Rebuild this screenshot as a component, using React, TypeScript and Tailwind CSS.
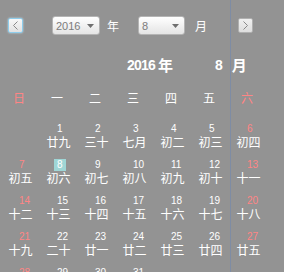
import React from "react";

const lunar = ["廿九","三十","七月","初二","初三","初四","初五","初六","初七","初八","初九","初十","十一","十二","十三","十四","十五","十六","十七","十八","十九","二十","廿一","廿二","廿三","廿四","廿五","廿六","廿七","廿八","廿九"];

const weekdays = ["日","一","二","三","四","五","六"];

function Arrow() {
  return (
    <svg width="7" height="4" viewBox="0 0 7 4" className="block">
      <path d="M0 0 H7 L3.5 4 Z" fill="#6f6f6f" />
    </svg>
  );
}

function Chevron({ dir }: { dir: "l" | "r" }) {
  return (
    <svg width="7" height="9" viewBox="0 0 7 9" className="block">
      <path d={dir === "l" ? "M5.5 0.5 L1.5 4.5 L5.5 8.5" : "M1.5 0.5 L5.5 4.5 L1.5 8.5"} fill="none" stroke="#8a8a8a" strokeWidth="1" />
    </svg>
  );
}

export default function App() {
  const cells: (number | null)[] = [null];
  for (let d = 1; d <= 31; d++) cells.push(d);
  while (cells.length % 7) cells.push(null);

  const cjk = { fontFamily: '"Noto Sans CJK SC", "Noto Sans", sans-serif' };

  return (
    <div className="relative w-[284px] h-[272px] overflow-hidden bg-[#939393] text-white" style={cjk}>
      <div className="pt-[16px]">
        <div className="flex items-center h-[19px]">
          <div className="ml-[8px] w-[15px] h-[15px] rounded-[2px] border border-[#8fcdec] bg-gradient-to-b from-[#f8f8f8] to-[#e2e2e2] flex items-center justify-center shadow-[0_0_2px_#bfe6f8]">
            <Chevron dir="l" />
          </div>
          <div className="ml-[29px] w-[48px] h-[19px] rounded-[3px] border border-[#b4b4b4] bg-gradient-to-b from-[#ffffff] to-[#e4e4e4] flex items-center justify-between pl-[3px] pr-[5px]">
            <span className="text-[11px] leading-[14px] text-[#7c7c7c]" style={{ fontFamily: '"Liberation Sans", sans-serif' }}>2016</span>
            <Arrow />
          </div>
          <span className="ml-[7px] text-[12px] leading-[14px]">年</span>
          <div className="ml-[19px] w-[47px] h-[19px] rounded-[3px] border border-[#b4b4b4] bg-gradient-to-b from-[#ffffff] to-[#e4e4e4] flex items-center justify-between pl-[3px] pr-[5px]">
            <span className="text-[11px] leading-[14px] text-[#7c7c7c]" style={{ fontFamily: '"Liberation Sans", sans-serif' }}>8</span>
            <Arrow />
          </div>
          <span className="ml-[10px] text-[12px] leading-[14px]">月</span>
          <div className="ml-[31px] w-[15px] h-[15px] rounded-[2px] border border-[#b0b0b0] bg-gradient-to-b from-[#f0f0f0] to-[#dedede] flex items-center justify-center">
            <Chevron dir="r" />
          </div>
        </div>

        <div className="mt-[21px] h-[18px] flex items-center pl-[127px] font-bold">
          <span className="text-[14px] leading-[18px] tracking-[-0.8px]" style={{ fontFamily: '"Liberation Sans", sans-serif' }}>2016</span>
          <span className="ml-[3px] text-[15px] leading-[18px]">年</span>
          <span className="ml-[42px] text-[14px] leading-[18px]" style={{ fontFamily: '"Liberation Sans", sans-serif' }}>8</span>
          <span className="ml-[9px] text-[15px] leading-[18px]">月</span>
        </div>

        <div className="mt-[17px] grid grid-cols-[repeat(7,38px)] h-[14px]">
          {weekdays.map((w, i) => (
            <div key={w} className={`text-center text-[12px] leading-[14px] ${i === 0 || i === 6 ? "text-[#ff8585]" : "text-white"}`}>{w}</div>
          ))}
        </div>

        <div className="mt-[16px] grid grid-cols-[repeat(7,38px)] auto-rows-[36px]">
          {cells.map((d, i) => {
            const wk = i % 7 === 0 || i % 7 === 6;
            return (
              <div key={i} className="flex flex-col">
                {d !== null && (
                  <>
                    <span
                      className={`mt-[2px] ml-[16px] px-[3px] w-fit h-[12px] text-[10px] leading-[12px] ${d === 8 ? "bg-[#9fd6d6] text-white" : wk ? "text-[#ff8585]" : "text-white"}`}
                      style={{ fontFamily: '"Liberation Sans", sans-serif' }}
                    >
                      {d}
                    </span>
                    <span className="pl-[3px] text-center text-[12px] leading-[14px] text-white">{lunar[d - 1]}</span>
                  </>
                )}
              </div>
            );
          })}
        </div>
      </div>

      <div className="absolute left-[230px] top-0 h-full w-px bg-[#7e8ca4]" />
    </div>
  );
}
